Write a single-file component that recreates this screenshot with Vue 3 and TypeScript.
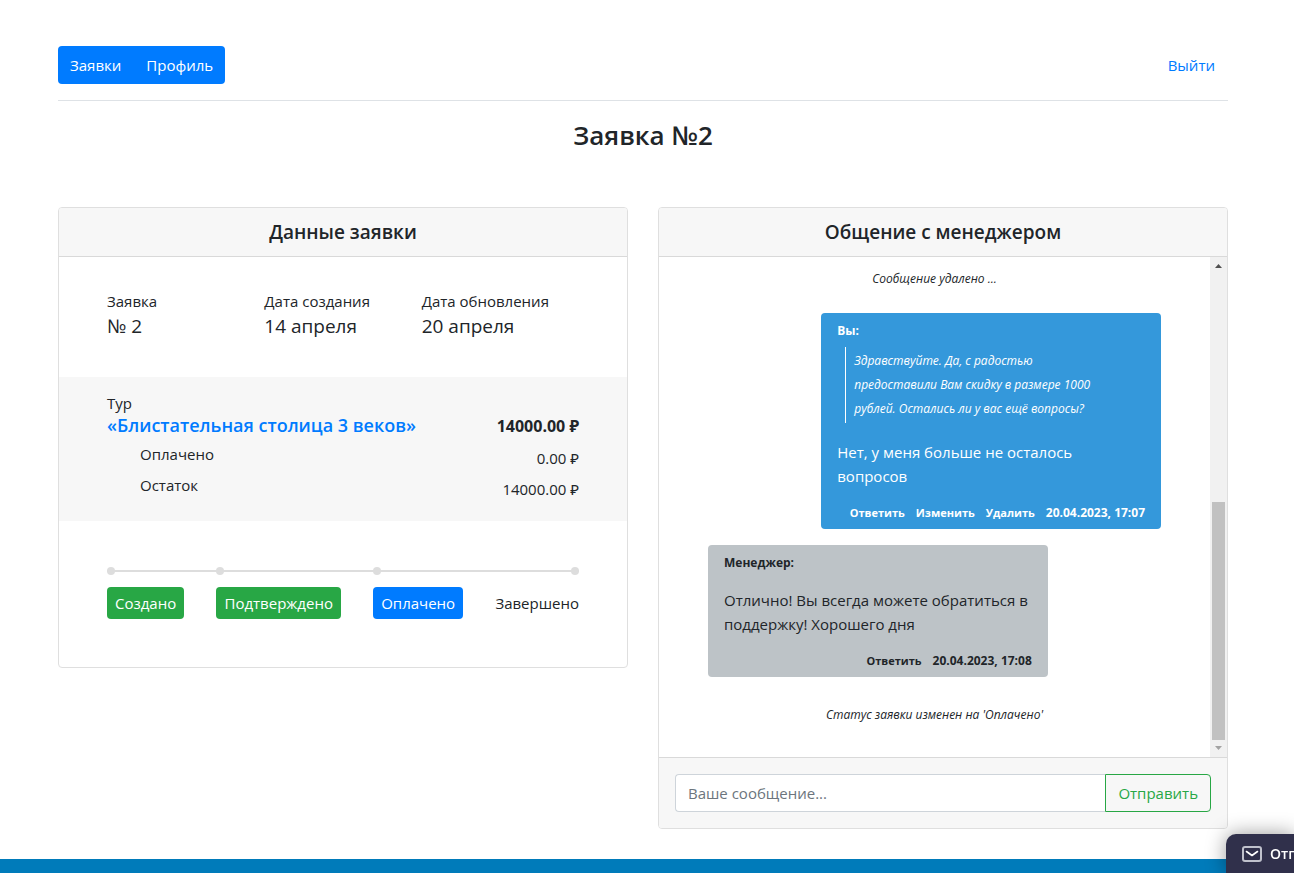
<script setup lang="ts">
import { ref } from 'vue'

interface Fact { label: string; value: string }
interface Step { label: string; state: 'done' | 'current' | 'next' }
interface Message {
  id: number
  own: boolean
  author: string
  quote?: string
  text: string
  actions: string[]
  time: string
}

const facts: Fact[] = [
  { label: 'Заявка', value: '№ 2' },
  { label: 'Дата создания', value: '14 апреля' },
  { label: 'Дата обновления', value: '20 апреля' },
]
const steps: Step[] = [
  { label: 'Создано', state: 'done' },
  { label: 'Подтверждено', state: 'done' },
  { label: 'Оплачено', state: 'current' },
  { label: 'Завершено', state: 'next' },
]
const messages: Message[] = [
  {
    id: 1,
    own: true,
    author: 'Вы:',
    quote: 'Здравствуйте. Да, с радостью предоставили Вам скидку в размере 1000 рублей. Остались ли у вас ещё вопросы?',
    text: 'Нет, у меня больше не осталось вопросов',
    actions: ['Ответить', 'Изменить', 'Удалить'],
    time: '20.04.2023, 17:07',
  },
  {
    id: 2,
    own: false,
    author: 'Менеджер:',
    text: 'Отлично! Вы всегда можете обратиться в поддержку! Хорошего дня',
    actions: ['Ответить'],
    time: '20.04.2023, 17:08',
  },
]
const draft = ref('')
</script>

<template>
  <div class="page">
    <div class="container">
      <header class="topbar">
        <nav class="group">
          <a class="group-link" href="#orders">Заявки</a>
          <a class="group-link" href="#profile">Профиль</a>
        </nav>
        <a class="logout" href="#logout">Выйти</a>
      </header>

      <h1 class="title">Заявка №2</h1>

      <main class="columns">
        <section class="card">
          <h2 class="card-head">Данные заявки</h2>
          <dl class="facts">
            <div v-for="f in facts" :key="f.label">
              <dt>{{ f.label }}</dt>
              <dd>{{ f.value }}</dd>
            </div>
          </dl>
          <div class="tour">
            <div class="tour-label">Тур</div>
            <div class="line main-line">
              <a class="tour-link" href="#tour">«Блистательная столица 3 веков»</a>
              <strong class="total">14000.00 ₽</strong>
            </div>
            <div class="line sub-line"><span>Оплачено</span><span class="sum">0.00 ₽</span></div>
            <div class="line sub-line"><span>Остаток</span><span class="sum">14000.00 ₽</span></div>
          </div>
          <ol class="steps">
            <li v-for="s in steps" :key="s.label" class="step">
              <span class="step-label" :class="s.state">{{ s.label }}</span>
            </li>
          </ol>
        </section>

        <section class="card">
          <h2 class="card-head">Общение с менеджером</h2>
          <div class="chat">
            <div class="feed">
              <p class="notice">Сообщение удалено ...</p>
              <article v-for="m in messages" :key="m.id" class="message" :class="{ own: m.own }">
                <div class="author">{{ m.author }}</div>
                <blockquote v-if="m.quote" class="quote">{{ m.quote }}</blockquote>
                <p class="text">{{ m.text }}</p>
                <footer class="actions">
                  <button v-for="a in m.actions" :key="a" type="button" class="action">{{ a }}</button>
                  <time>{{ m.time }}</time>
                </footer>
              </article>
              <p class="notice last">Статус заявки изменен на 'Оплачено'</p>
            </div>
            <div class="scrollbar" aria-hidden="true">
              <svg class="arrow" viewBox="0 0 17 17"><path d="M5 11h7L8.500 7z" fill="#505050" /></svg>
              <div class="track"><div class="thumb"></div></div>
              <svg class="arrow" viewBox="0 0 17 17"><path d="M5 6h7l-3.500 4z" fill="#a3a3a3" /></svg>
            </div>
          </div>
          <form class="composer" @submit.prevent>
            <input v-model="draft" class="field" type="text" placeholder="Ваше сообщение..." aria-label="Ваше сообщение" />
            <button class="send" type="submit">Отправить</button>
          </form>
        </section>
      </main>
    </div>
    <footer class="site-footer"></footer>
    <button class="widget" type="button">
      <svg class="mail" viewBox="0 0 20 16" fill="none" stroke="currentColor">
        <rect x="1" y="1" width="18" height="14" rx="2" stroke-width="2" stroke="#bfc1cc" />
        <path d="M4.500 5.500 10 9.500l5.500-4" stroke-width="1.600" stroke-linecap="round" stroke-linejoin="round" />
      </svg>
      <span class="widget-text">Отправьте нам сообщение</span>
    </button>
  </div>
</template>

<style>
body {
  margin: 0;
  overflow: hidden;
}
</style>

<style scoped>
.page {
  display: flex;
  flex-direction: column;
  height: 100vh;
  overflow: hidden;
  background: #fff;
  color: #212529;
  font: 400 15px/24px "Open Sans", "Noto Sans", sans-serif;
}
.page * { box-sizing: border-box; }
h1, h2, p, dl, dd, ol, blockquote { margin: 0; padding: 0; }
button, input { font: inherit; color: inherit; margin: 0; }
a { color: #007bff; text-decoration: none; }
.container { padding: 46px 66px 30px 58px; }
.topbar {
  display: flex;
  justify-content: space-between;
  padding-bottom: 16px;
  border-bottom: 1px solid #dee2e6;
}
.group { display: flex; border-radius: 4px; background: #007bff; }
.group-link { padding: 7px 12px; color: #fff; }
.group-link + .group-link { padding-left: 13px; }
.logout { padding: 7px 13px; }
.title {
  margin: 18px 0 56px;
  font-size: 26px;
  line-height: 32px;
  font-weight: 600;
  text-align: center;
}
.columns {
  display: grid;
  grid-template-columns: 1fr 1fr;
  gap: 30px;
  align-items: start;
}
.card {
  border: 1px solid #dfdfdf;
  border-radius: 4px;
  overflow: hidden;
}
.card-head {
  padding: 12px 20px;
  background: #f7f7f7;
  border-bottom: 1px solid #d9d9d9;
  font-size: 19px;
  font-weight: 600;
  text-align: center;
}
.facts {
  display: grid;
  grid-template-columns: repeat(3, 1fr);
  padding: 32px 48px 38px;
}
.facts dd { font-size: 19px; line-height: 26px; }
.tour { padding: 16px 48px 21px; background: #f7f7f7; }
.tour-label { line-height: 21px; }
.line { display: flex; justify-content: space-between; }
.main-line { line-height: 24px; }
.tour-link { font-size: 18px; line-height: 22px; font-weight: 600; }
.total { font-size: 16px; }
.sub-line { padding: 4px 0 3px 33px; }
.sum { padding-top: 4px; margin-bottom: -4px; }
.steps {
  display: flex;
  justify-content: space-between;
  padding: 46px 48px 48px;
  list-style: none;
}
.step { position: relative; flex: 1 0 auto; padding: 20px 32px 0 0; }
.step:last-child { flex: none; padding-right: 0; }
.step::before {
  content: "";
  position: absolute;
  top: 3px;
  left: 0;
  right: 0;
  height: 2px;
  background: #ddd;
}
.step::after {
  content: "";
  position: absolute;
  top: 0;
  left: 0;
  width: 8px;
  height: 8px;
  border-radius: 50%;
  background: #ddd;
}
.step:last-child::after { left: auto; right: 0; }
.step-label { display: inline-block; padding: 4px 8px; border-radius: 4px; color: #fff; }
.done { background: #28a745; }
.current { background: #007bff; }
.next { padding: 4px 0; color: inherit; }
.chat { display: flex; height: 500px; }
.feed {
  display: flex;
  flex: 1;
  flex-direction: column;
  align-items: flex-start;
  padding: 10px 49px 0;
  overflow: hidden;
}
.notice { align-self: center; margin-bottom: 22px; font-size: 12px; font-style: italic; }
.last { margin: 10px 0 0; }
.message {
  width: 75%;
  margin-bottom: 16px;
  padding: 8px 16px 6px;
  border-radius: 4px;
  background: #bdc3c7;
}
.own { align-self: flex-end; background: #3498db; color: #fff; }
.author { font-size: 12px; line-height: 20px; font-weight: 700; }
.quote {
  margin: 6px 8px 2px;
  padding: 2px 32px 2px 8px;
  border-left: 1px solid #fff;
  font-size: 12px;
  font-style: italic;
}
.text { padding: 15px 0; }
.actions {
  display: flex;
  justify-content: flex-end;
  align-items: baseline;
  gap: 11px;
  font-size: 12px;
  line-height: 20px;
  font-weight: 700;
  white-space: nowrap;
}
.action { padding: 0; border: 0; background: none; font-size: 11px; cursor: pointer; }
.scrollbar { display: flex; flex-direction: column; width: 17px; background: #f1f1f1; }
.arrow { display: block; width: 17px; height: 17px; }
.track { display: flex; flex: 1; flex-direction: column; justify-content: flex-end; padding: 0 2px; }
.thumb { height: 51%; background: #c1c1c1; }
.composer {
  display: flex;
  padding: 16px;
  background: #f7f7f7;
  border-top: 1px solid #d9d9d9;
}
.field {
  flex: 1;
  min-width: 0;
  height: 38px;
  padding: 0 12px;
  border: 1px solid #ced4da;
  border-right: 0;
  border-radius: 4px 0 0 4px;
  background: #fff;
}
.field::placeholder { color: #6c757d; opacity: 1; }
.send {
  padding: 0 12px;
  border: 1px solid #28a745;
  border-radius: 0 4px 4px 0;
  background: none;
  color: #28a745;
}
.site-footer { flex: 1; background: #007bba; }
.widget {
  position: fixed;
  right: 0;
  bottom: 0;
  display: flex;
  align-items: center;
  gap: 8px;
  width: 68px;
  height: 39px;
  padding: 0 0 0 16px;
  border: 0;
  border-radius: 10px 0 0 0;
  overflow: hidden;
  background: #30304b;
  box-shadow: 0 0 20px rgba(0, 0, 0, 0.4);
  color: #fff;
  white-space: nowrap;
}
.mail { flex: none; width: 20px; height: 16px; }
.widget-text { font-size: 14px; font-weight: 600; }
</style>
